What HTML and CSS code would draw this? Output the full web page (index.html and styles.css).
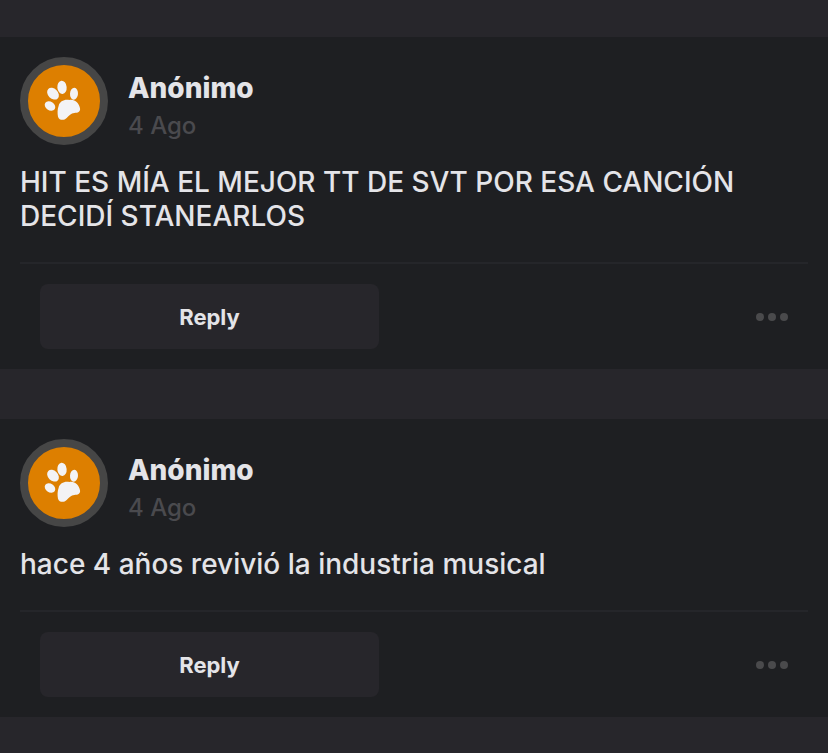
FILE: index.html
```
<!DOCTYPE html>
<html lang="es">
<head>
    <meta charset="UTF-8">
    <meta name="viewport" content="width=device-width, initial-scale=1.0">
    <title>Anónimo</title>
    <link rel="stylesheet" href="styles.css">
</head>
<body>
    <svg width="0" height="0" class="sprite" aria-hidden="true">
        <symbol id="paw" viewBox="54 60 216 216">
            <ellipse cx="120" cy="183" rx="17" ry="13" transform="rotate(35 120 183)"/>
            <ellipse cx="129" cy="146" rx="20" ry="15" transform="rotate(45 129 146)"/>
            <ellipse cx="156" cy="127" rx="14" ry="20" transform="rotate(-5 156 127)"/>
            <ellipse cx="192" cy="146" rx="12" ry="18" transform="rotate(4 192 146)"/>
            <path d="M146 182C149 169 163 162 178 165C195 162 207 175 210 190C212 201 203 204 193 204C183 205 177 212 170 219C162 227 148 227 144 215C142 203 142 194 146 182Z"/>
        </symbol>
        <symbol id="dots" viewBox="0 0 32 8">
            <circle cx="4" cy="4" r="4"/>
            <circle cx="16" cy="4" r="4"/>
            <circle cx="28" cy="4" r="4"/>
        </symbol>
    </svg>

    <main class="feed">
        <article class="post">
            <header class="post-header">
                <div class="avatar"><svg class="paw"><use href="#paw"/></svg></div>
                <div class="meta">
                    <h2 class="name">Anónimo</h2>
                    <time class="date">4 Ago</time>
                </div>
            </header>
            <p class="text">HIT ES MÍA EL MEJOR TT DE SVT POR ESA CANCIÓN DECIDÍ STANEARLOS</p>
            <footer class="actions">
                <button class="reply" type="button">Reply</button>
                <button class="more" type="button" aria-label="Más opciones"><svg class="dots"><use href="#dots"/></svg></button>
            </footer>
        </article>

        <article class="post">
            <header class="post-header">
                <div class="avatar"><svg class="paw"><use href="#paw"/></svg></div>
                <div class="meta">
                    <h2 class="name">Anónimo</h2>
                    <time class="date">4 Ago</time>
                </div>
            </header>
            <p class="text">hace 4 años revivió la industria musical</p>
            <footer class="actions">
                <button class="reply" type="button">Reply</button>
                <button class="more" type="button" aria-label="Más opciones"><svg class="dots"><use href="#dots"/></svg></button>
            </footer>
        </article>
    </main>
</body>
</html>
```
FILE: styles.css
```
* {
    box-sizing: border-box;
}
body {
    margin: 0;
    background-color: #27262b;
    color: #e4e4e8;
    font-family: Inter, "Liberation Sans", sans-serif;
}
.sprite {
    position: absolute;
}
.feed {
    display: flex;
    flex-direction: column;
    gap: 50px;
    padding: 37px 0 35px;
}
.post {
    padding: 20px;
    background-color: #1e1f22;
}
.post-header {
    display: flex;
    align-items: center;
    gap: 20px;
}
.avatar {
    width: 88px;
    height: 88px;
    flex-shrink: 0;
    border: 8px solid #464646;
    border-radius: 50%;
    background-color: #dd7f00;
}
.paw {
    display: block;
    width: 72px;
    height: 72px;
    fill: #f3f3f5;
}
.meta {
    display: flex;
    flex-direction: column;
    gap: 4px;
    padding-top: 10px;
}
.name {
    margin: 0;
    font-size: 28px;
    line-height: 36px;
    font-weight: 800;
}
.date {
    color: #4a4a4e;
    font-size: 24px;
    line-height: 32px;
    font-weight: 500;
}
.text {
    margin: 20px 0 29px;
    font-size: 28px;
    line-height: 34px;
    font-weight: 500;
}
.actions {
    display: flex;
    align-items: center;
    justify-content: space-between;
    padding: 20px 20px 0;
    border-top: 2px solid #25262a;
}
.reply {
    width: calc(50% - 35px);
    height: 65px;
    padding: 0;
    border: none;
    border-radius: 8px;
    background-color: #27262b;
    color: #e4e4e8;
    font-family: inherit;
    font-size: 22px;
    font-weight: 700;
    cursor: pointer;
}
.more {
    padding: 12px 0;
    border: none;
    background: none;
    cursor: pointer;
}
.dots {
    display: block;
    width: 32px;
    height: 8px;
    fill: #4a4a4c;
}
```
